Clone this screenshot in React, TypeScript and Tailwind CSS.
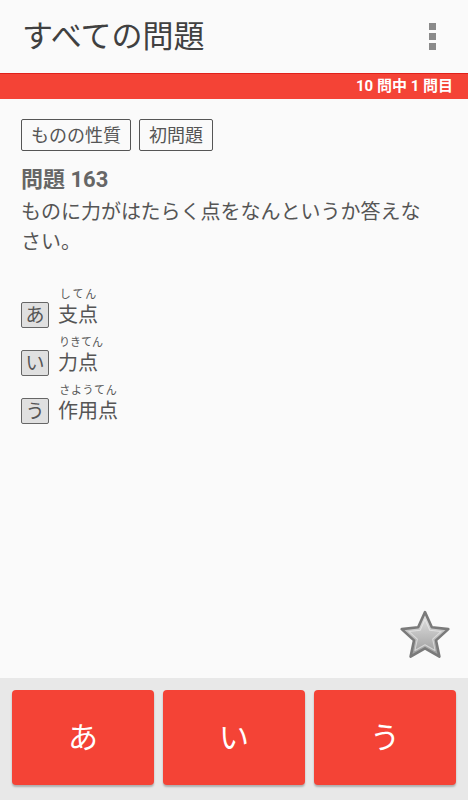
import { memo } from 'react';

const FONT = { fontFamily: 'Roboto, "Noto Sans CJK JP", "Noto Sans", sans-serif' };

const choices = [
    { key: 'あ', ruby: ['し', 'て', 'ん'], text: '支点' },
    { key: 'い', ruby: ['り', 'き', 'て', 'ん'], text: '力点' },
    { key: 'う', ruby: ['さ', 'よ', 'う', 'て', 'ん'], text: '作用点' },
];

function StarIcon() {
    return (
        <svg width="56" height="54" viewBox="0 0 54 52">
            <defs>
                <linearGradient id="starFill" x1="0" y1="0" x2="0" y2="1">
                    <stop offset="0" stopColor="#e6e6e6" />
                    <stop offset="1" stopColor="#9a9a9a" />
                </linearGradient>
            </defs>
            <path
                d="M27 3 L33.6 17.6 L49.5 19.4 L37.6 30.2 L40.9 45.9 L27 37.9 L13.1 45.9 L16.4 30.2 L4.5 19.4 L20.4 17.6 Z"
                fill="url(#starFill)"
                stroke="#7a7a7a"
                strokeWidth="2.5"
                strokeLinejoin="round"
            />
            <path
                d="M27 10 L31.6 20.4 L42.6 21.6 L34.4 29 L36.7 40 L27 34.4 L17.3 40 L19.6 29 L11.4 21.6 L22.4 20.4 Z"
                fill="none"
                stroke="#f2f2f2"
                strokeOpacity="0.6"
                strokeWidth="1"
                strokeLinejoin="round"
            />
        </svg>
    );
}

export default memo(function App() {
    return (
        <div className="w-[468px] h-[800px] flex flex-col bg-[#fafafa] overflow-hidden" style={FONT}>
            {/* Header */}
            <div className="h-[73px] flex items-center justify-between pl-[22px] pr-[32px]">
                <div className="text-[31px] text-[#404040] leading-none">すべての問題</div>
                <div className="flex flex-col gap-[3px]">
                    <div className="w-[7px] h-[7px] bg-[#8a8a8a]" />
                    <div className="w-[7px] h-[7px] bg-[#8a8a8a]" />
                    <div className="w-[7px] h-[7px] bg-[#8a8a8a]" />
                </div>
            </div>

            {/* Progress bar */}
            <div className="h-[26px] bg-[#f44336] border-t border-[#e0201a] flex items-center justify-end pr-[15px]">
                <span className="text-white font-bold text-[15px] leading-none">10 問中 1 問目</span>
            </div>

            {/* Content */}
            <div className="flex-1 relative px-[21px] pt-[20px]">
                <div className="flex gap-[8px]">
                    <div className="h-[32px] px-[9px] flex items-center border border-[#555] rounded-[2px] text-[18px] text-[#555]">ものの性質</div>
                    <div className="h-[32px] px-[9px] flex items-center border border-[#555] rounded-[2px] text-[18px] text-[#555]">初問題</div>
                </div>

                <div className="mt-[16px] text-[22px] font-bold text-[#666] leading-[26px]">問題 163</div>
                <div className="mt-[4px] text-[20px] text-[#555] leading-[30px] pr-[10px]">
                    ものに力がはたらく点をなんというか答えなさい。
                </div>

                <div className="mt-[30px] flex flex-col gap-[7px]">
                    {choices.map(c => (
                        <div key={c.key} className="flex items-end gap-[9px]">
                            <div className="w-[28px] h-[26px] flex items-center justify-center border border-[#666] rounded-[2px] bg-[#e0e0e0] text-[19px] text-[#555] leading-none">
                                {c.key}
                            </div>
                            <div className="flex flex-col">
                                <div className="flex justify-around text-[11px] text-[#555] leading-[15px] px-[1px]">
                                    {c.ruby.map((r, i) => (
                                        <span key={i}>{r}</span>
                                    ))}
                                </div>
                                <div className="text-[20px] text-[#555] leading-[26px]">{c.text}</div>
                            </div>
                        </div>
                    ))}
                </div>

                <div className="absolute right-[15px] bottom-[15px]">
                    <StarIcon />
                </div>
            </div>

            {/* Answer buttons */}
            <div className="h-[122px] bg-[#e8e8e8] flex gap-[9px] px-[12px] pt-[12px] pb-[15px]">
                {choices.map(c => (
                    <button
                        key={c.key}
                        className="flex-1 bg-[#f44336] rounded-[4px] text-white text-[30px] flex items-center justify-center shadow-[0_2px_2px_rgba(0,0,0,0.25)]"
                    >
                        {c.key}
                    </button>
                ))}
            </div>
        </div>
    );
});
